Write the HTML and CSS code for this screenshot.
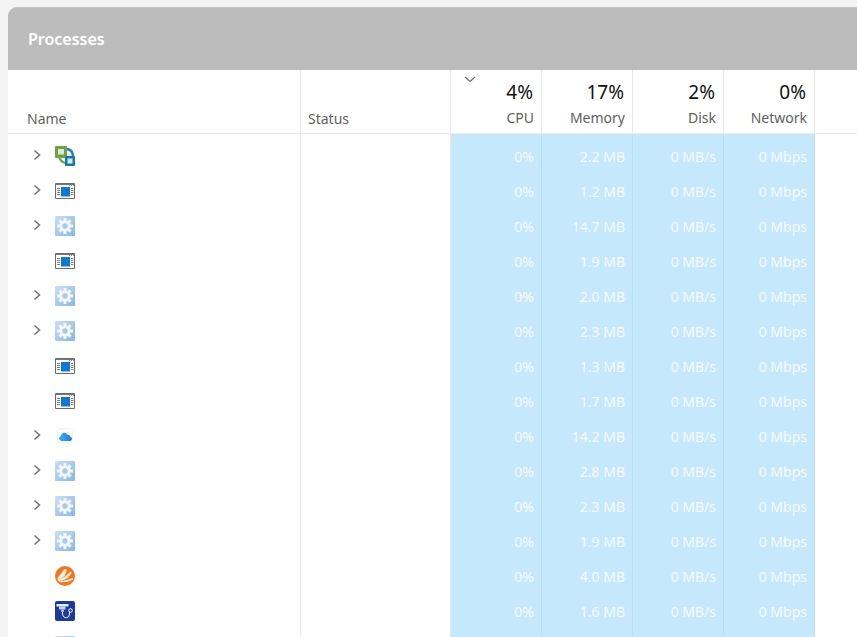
FILE: index.html
```html
<!DOCTYPE html>
<html lang="en">
<head>
<meta charset="utf-8">
<title>Processes</title>
<link rel="stylesheet" href="styles.css">
</head>
<body>
<svg class="defs" width="0" height="0" aria-hidden="true">
  <symbol id="chev" viewBox="0 0 10 12"><path d="M2.500 1.500 7.500 6 2.500 10.500" fill="none" stroke="#6f6f6f" stroke-width="1.500"/></symbol>
  <symbol id="vm" viewBox="0 0 20 20">
    <path d="M4 10q1 6 7 7" fill="none" stroke="#6fa33f" stroke-width="2.200"/>
    <path d="M11 3q7 0 7 8" fill="none" stroke="#1f86c4" stroke-width="2.600"/>
    <rect width="12" height="12" rx="1" fill="#6fa33f"/><path d="M3 3h6v5.500H3z" fill="#dde9d6"/>
    <rect x="10" y="10" width="10" height="10" rx="1" fill="#1279b5"/><path d="M12.500 12.500h5v5h-5z" fill="#d8ecf7"/>
  </symbol>
  <symbol id="win" viewBox="0 0 20 16">
    <path d="M.5.5h19v15H.5z" fill="#fff" stroke="#6b6b6b"/>
    <path d="M1 1h18v1H1z" fill="#777"/>
    <path d="M14 2.500h1M16 2.500h1M18 2.500h1" stroke="#999"/>
    <path d="M6 4h9v9.500H6z" fill="#0f78d4"/>
    <path d="M2 5.500h3M2 7.500h3M2 9.500h3M2 11.500h3M16 5.500h2.500M16 7.500h2.500M16 9.500h2.500M16 11.500h2.500" stroke="#808080"/>
  </symbol>
  <symbol id="gear" viewBox="0 0 20 20">
    <defs><linearGradient id="gb" x1="0" y1="0" x2="1" y2="1"><stop offset="0" stop-color="#c9dff6"/><stop offset="1" stop-color="#86b6e8"/></linearGradient></defs>
    <rect width="20" height="20" rx="1" fill="url(#gb)"/>
    <g stroke="#f4f8fd" stroke-width="3"><path d="M10 2v16M2 10h16M4.400 4.400l11.200 11.200M15.600 4.400 4.400 15.600"/></g>
    <circle cx="10" cy="10" r="5.600" fill="#f4f8fd"/><circle cx="10" cy="10" r="2.700" fill="#a6c9ee"/>
  </symbol>
  <symbol id="cloud" viewBox="0 0 16 16">
    <defs><linearGradient id="cb" x1="0" y1="0" x2="1" y2="0"><stop offset="0" stop-color="#3ab4f5"/><stop offset="1" stop-color="#1a78ea"/></linearGradient></defs>
    <rect x=".5" y=".5" width="15" height="15" rx="3.500" fill="#fff" stroke="#f2f2f2"/>
    <path d="M4.500 13a2.500 2.500 0 0 1-.7-4.900 3.600 3.600 0 0 1 6.800-1.400 2.400 2.400 0 0 1 2.700 2 2.200 2.200 0 0 1 0 4.300z" fill="url(#cb)"/>
  </symbol>
  <symbol id="avast" viewBox="0 0 20 20">
    <circle cx="10" cy="10" r="10" fill="#f4761c"/>
    <path d="M3 15.500 2.500 12 9.500 3l2.500.8L9.800 9.500z" fill="#fdeee0"/>
    <path d="M4.500 16 3.800 14 10.800 10 15.500 5.500l1.300 1.500-4.300 5z" fill="#fdeee0"/>
    <path d="M6 16.500l-.5-1 7.500-2 4.500-1.500.3 1.700-5.300 2z" fill="#fdeee0"/>
  </symbol>
  <symbol id="steth" viewBox="0 0 20 20">
    <rect width="20" height="20" rx="2" fill="#1c3a9e"/>
    <path d="M1.500 3h12v2.500h-12z" fill="#e8eefb"/><path d="M4 5.500h6.500v3H4z" fill="#c7d4f2"/><path d="M6 8.500h3V11H6z" fill="#9fb3e6"/>
    <path d="M7.500 11v2q.8 4 4 3.700 3-.2 3-3.700v-2" fill="none" stroke="#fff" stroke-width="1"/>
    <circle cx="15.500" cy="9.500" r="1.800" fill="none" stroke="#fff" stroke-width="1"/>
  </symbol>
</svg>

<main class="panel">
  <header class="title">Processes</header>

  <div class="row head">
    <div class="cell name-h">Name</div>
    <div class="cell status-h">Status</div>
    <div class="cell metric">
      <svg class="sort" viewBox="0 0 12 7" aria-hidden="true"><path d="M1 1l5 4.500L11 1" fill="none" stroke="#6f6f6f" stroke-width="1.200"/></svg>
      <span class="pct">4%</span><span class="lbl">CPU</span>
    </div>
    <div class="cell metric"><span class="pct">17%</span><span class="lbl">Memory</span></div>
    <div class="cell metric"><span class="pct">2%</span><span class="lbl">Disk</span></div>
    <div class="cell metric"><span class="pct">0%</span><span class="lbl">Network</span></div>
    <div class="cell spare"></div>
  </div>

  <div class="row item"><div class="cell name"><svg class="chev"><use href="#chev"/></svg><svg class="ico"><use href="#vm"/></svg></div><div class="cell status"></div><div class="cell val">0%</div><div class="cell val">2.2 MB</div><div class="cell val">0 MB/s</div><div class="cell val">0 Mbps</div><div class="cell spare"></div></div>
  <div class="row item"><div class="cell name"><svg class="chev"><use href="#chev"/></svg><svg class="ico win"><use href="#win"/></svg></div><div class="cell status"></div><div class="cell val">0%</div><div class="cell val">1.2 MB</div><div class="cell val">0 MB/s</div><div class="cell val">0 Mbps</div><div class="cell spare"></div></div>
  <div class="row item"><div class="cell name"><svg class="chev"><use href="#chev"/></svg><svg class="ico"><use href="#gear"/></svg></div><div class="cell status"></div><div class="cell val">0%</div><div class="cell val">14.7 MB</div><div class="cell val">0 MB/s</div><div class="cell val">0 Mbps</div><div class="cell spare"></div></div>
  <div class="row item"><div class="cell name"><span class="nochev"></span><svg class="ico win"><use href="#win"/></svg></div><div class="cell status"></div><div class="cell val">0%</div><div class="cell val">1.9 MB</div><div class="cell val">0 MB/s</div><div class="cell val">0 Mbps</div><div class="cell spare"></div></div>
  <div class="row item"><div class="cell name"><svg class="chev"><use href="#chev"/></svg><svg class="ico"><use href="#gear"/></svg></div><div class="cell status"></div><div class="cell val">0%</div><div class="cell val">2.0 MB</div><div class="cell val">0 MB/s</div><div class="cell val">0 Mbps</div><div class="cell spare"></div></div>
  <div class="row item"><div class="cell name"><svg class="chev"><use href="#chev"/></svg><svg class="ico"><use href="#gear"/></svg></div><div class="cell status"></div><div class="cell val">0%</div><div class="cell val">2.3 MB</div><div class="cell val">0 MB/s</div><div class="cell val">0 Mbps</div><div class="cell spare"></div></div>
  <div class="row item"><div class="cell name"><span class="nochev"></span><svg class="ico win"><use href="#win"/></svg></div><div class="cell status"></div><div class="cell val">0%</div><div class="cell val">1.3 MB</div><div class="cell val">0 MB/s</div><div class="cell val">0 Mbps</div><div class="cell spare"></div></div>
  <div class="row item"><div class="cell name"><span class="nochev"></span><svg class="ico win"><use href="#win"/></svg></div><div class="cell status"></div><div class="cell val">0%</div><div class="cell val">1.7 MB</div><div class="cell val">0 MB/s</div><div class="cell val">0 Mbps</div><div class="cell spare"></div></div>
  <div class="row item"><div class="cell name"><svg class="chev"><use href="#chev"/></svg><svg class="ico small"><use href="#cloud"/></svg></div><div class="cell status"></div><div class="cell val">0%</div><div class="cell val">14.2 MB</div><div class="cell val">0 MB/s</div><div class="cell val">0 Mbps</div><div class="cell spare"></div></div>
  <div class="row item"><div class="cell name"><svg class="chev"><use href="#chev"/></svg><svg class="ico"><use href="#gear"/></svg></div><div class="cell status"></div><div class="cell val">0%</div><div class="cell val">2.8 MB</div><div class="cell val">0 MB/s</div><div class="cell val">0 Mbps</div><div class="cell spare"></div></div>
  <div class="row item"><div class="cell name"><svg class="chev"><use href="#chev"/></svg><svg class="ico"><use href="#gear"/></svg></div><div class="cell status"></div><div class="cell val">0%</div><div class="cell val">2.3 MB</div><div class="cell val">0 MB/s</div><div class="cell val">0 Mbps</div><div class="cell spare"></div></div>
  <div class="row item"><div class="cell name"><svg class="chev"><use href="#chev"/></svg><svg class="ico"><use href="#gear"/></svg></div><div class="cell status"></div><div class="cell val">0%</div><div class="cell val">1.9 MB</div><div class="cell val">0 MB/s</div><div class="cell val">0 Mbps</div><div class="cell spare"></div></div>
  <div class="row item"><div class="cell name"><span class="nochev"></span><svg class="ico"><use href="#avast"/></svg></div><div class="cell status"></div><div class="cell val">0%</div><div class="cell val">4.0 MB</div><div class="cell val">0 MB/s</div><div class="cell val">0 Mbps</div><div class="cell spare"></div></div>
  <div class="row item"><div class="cell name"><span class="nochev"></span><svg class="ico"><use href="#steth"/></svg></div><div class="cell status"></div><div class="cell val">0%</div><div class="cell val">1.6 MB</div><div class="cell val">0 MB/s</div><div class="cell val">0 Mbps</div><div class="cell spare"></div></div>
  <div class="row item"><div class="cell name"><span class="nochev"></span><svg class="ico"><use href="#gear"/></svg></div><div class="cell status"></div><div class="cell val"></div><div class="cell val"></div><div class="cell val"></div><div class="cell val"></div><div class="cell spare"></div></div>
</main>
</body>
</html>
```
FILE: styles.css
```css
html, body {
  margin: 0;
  height: 100%;
  overflow: hidden;
}
body {
  background: #f3f3f3;
  padding: 7px 0 0 8px;
  box-sizing: border-box;
  font-family: "Noto Sans", "Open Sans", sans-serif;
}
.defs { position: absolute; }
.panel {
  background: #fff;
  border-top-left-radius: 9px;
  overflow: hidden;
  height: 100%;
}
.title {
  height: 63px;
  box-sizing: border-box;
  background: #bcbcbc;
  border-top: 1px solid #c6c6c6;
  color: #fff;
  font-size: 16px;
  font-weight: 600;
  line-height: 62px;
  padding-left: 20px;
}
.row {
  display: grid;
  grid-template-columns: 293px 150px 91px 91px 91px 91px 1fr;
}
.cell { border-right: 1px solid #e9e9e9; box-sizing: border-box; }
.cell.spare { border-right: 0; }
.head { height: 64px; border-bottom: 1px solid #e9e9e9; box-sizing: border-box; color: #5f5f5f; font-size: 14px; }
.name-h { padding: 39px 0 0 19px; }
.status-h { padding: 39px 0 0 7px; }
.metric {
  position: relative;
  display: flex;
  flex-direction: column;
  align-items: flex-end;
  padding: 9px 7px 0 0;
}
.pct { color: #111; font-size: 19px; line-height: 26px; margin-right: 1px; }
.lbl { line-height: 20px; margin-top: 3px; }
.sort { position: absolute; left: 13px; top: 6px; width: 12px; height: 7px; }
.item { height: 35px; grid-template-rows: 35px; }
.name { display: flex; align-items: flex-start; padding: 12px 0 0 24px; }
.chev { width: 10px; height: 12px; flex: none; margin-top: 3px; }
.nochev { width: 10px; flex: none; }
.ico { width: 20px; height: 20px; flex: none; margin-left: 13px; }
.ico.win { height: 16px; margin-top: 2px; }
.ico.small { width: 16px; height: 16px; margin: 2px 2px 0 15px; }
.val {
  background: #c6e8fd;
  border-right-color: #b7def7;
  color: #f6fbff;
  font-size: 14px;
  padding: 11px 7px 0 0;
  line-height: 24px;
  text-align: right;
}
```
